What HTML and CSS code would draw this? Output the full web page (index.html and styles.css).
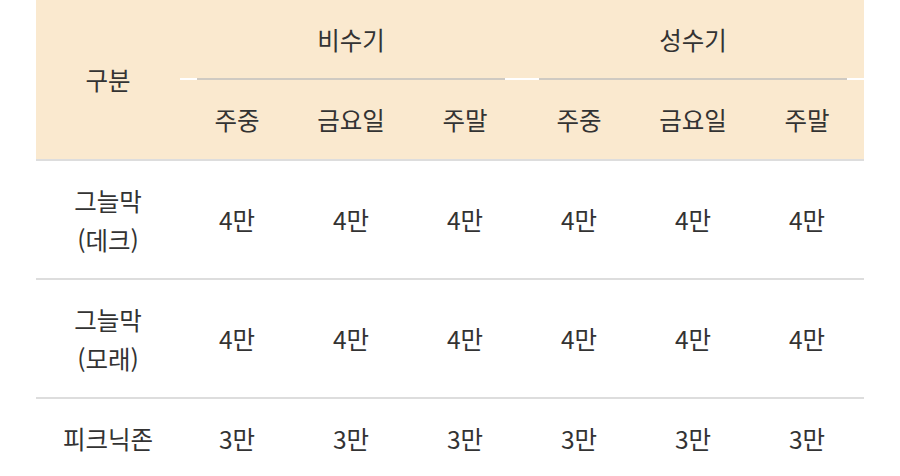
FILE: index.html
```html
<!DOCTYPE html>
<html lang="ko">
<head>
<meta charset="utf-8">
<link rel="stylesheet" href="styles.css">
</head>
<body>
<table class="price">
  <colgroup>
    <col class="c-name">
    <col class="c-val"><col class="c-val"><col class="c-val">
    <col class="c-val"><col class="c-val"><col class="c-val">
  </colgroup>
  <thead>
    <tr class="h1">
      <th rowspan="2" class="head-name">구분</th>
      <th colspan="3" class="group">비수기</th>
      <th colspan="3" class="group">성수기</th>
    </tr>
    <tr class="h2">
      <th>주중</th><th>금요일</th><th>주말</th>
      <th>주중</th><th>금요일</th><th>주말</th>
    </tr>
  </thead>
  <tbody>
    <tr>
      <td>그늘막<br>(데크)</td>
      <td>4만</td><td>4만</td><td>4만</td><td>4만</td><td>4만</td><td>4만</td>
    </tr>
    <tr>
      <td>그늘막<br>(모래)</td>
      <td>4만</td><td>4만</td><td>4만</td><td>4만</td><td>4만</td><td>4만</td>
    </tr>
    <tr>
      <td>피크닉존</td>
      <td>3만</td><td>3만</td><td>3만</td><td>3만</td><td>3만</td><td>3만</td>
    </tr>
  </tbody>
</table>
</body>
</html>
```

FILE: styles.css
```css
html, body {
  margin: 0;
  padding: 0;
  background: #ffffff;
}

.price {
  margin-left: 36px;
  width: 828px;
  table-layout: fixed;
  border-collapse: separate;
  border-spacing: 0;
  font-family: "Noto Sans CJK KR", "Noto Sans", sans-serif;
  font-size: 24.5px;
  color: #333333;
}

.c-name { width: 144px; }
.c-val { width: 114px; }

.price th {
  font-weight: 400;
  background-color: #fae9cf;
  text-align: center;
  vertical-align: middle;
  padding: 0;
}

.price .h1 .group {
  height: 80px;
  padding-bottom: 2px;
  box-sizing: border-box;
  background:
    linear-gradient(#cfcac2, #cfcac2) center bottom / calc(100% - 34px) 2px no-repeat,
    linear-gradient(#ffffff, #ffffff) center bottom / 100% 2px no-repeat,
    #fae9cf;
}

.price .h2 th {
  height: 79px;
  border-bottom: 2px solid #dddddd;
}

.price .head-name {
  border-bottom: 2px solid #dddddd;
}

.price td {
  padding: 19.5px 0;
  text-align: center;
  vertical-align: middle;
  line-height: 39px;
  border-bottom: 2px solid #dddddd;
}
```
